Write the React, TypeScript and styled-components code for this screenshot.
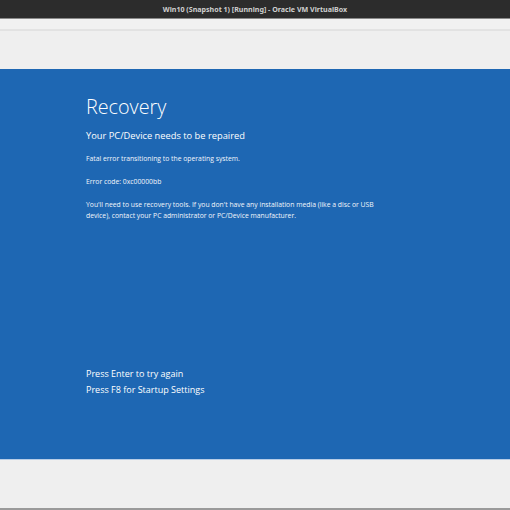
import styled, { createGlobalStyle } from "styled-components";

const Global = createGlobalStyle`
  html, body {
    margin: 0;
    padding: 0;
    background: #efefef;
  }
  #root {
    width: 510px;
    height: 510px;
    overflow: hidden;
  }
`;

export default function App() {
  return (
    <>
      <Global />
      <Window>
        <TitleBar>Win10 (Snapshot 1) [Running] - Oracle VM VirtualBox</TitleBar>
        <Toolbar />
        <Screen>
          <Top>
            <Heading>Recovery</Heading>
            <Subheading>Your PC/Device needs to be repaired</Subheading>
            <Message>Fatal error transitioning to the operating system.</Message>
            <Message>Error code: 0xc00000bb</Message>
            <Message>
              You'll need to use recovery tools. If you don't have any installation media (like a disc or USB
              device), contact your PC administrator or PC/Device manufacturer.
            </Message>
          </Top>
          <Options>
            <Option>Press Enter to try again</Option>
            <Option>Press F8 for Startup Settings</Option>
          </Options>
        </Screen>
        <StatusBar />
      </Window>
    </>
  );
}

const Window = styled.div`
  width: 510px;
  height: 510px;
  display: flex;
  flex-direction: column;
  background: #efefef;
`;

const TitleBar = styled.div`
  height: 18px;
  flex: none;
  background: #2c2c2c;
  border-bottom: 1px solid #8a8a8a;
  color: #d0d0d0;
  font-family: "Noto Sans", sans-serif;
  font-weight: bold;
  font-size: 7.1px;
  display: flex;
  align-items: center;
  justify-content: center;
`;

const Toolbar = styled.div`
  height: 50px;
  flex: none;
  background: #efefef;
  box-sizing: border-box;
  border-top: 11px solid #f1f1f1;
  box-shadow: inset 0 1px 0 #e2e2e2;
  position: relative;
  &::before {
    content: "";
    position: absolute;
    left: 0;
    right: 0;
    top: -1px;
    height: 1px;
    background: #e3e3e3;
  }
`;

const Screen = styled.div`
  height: 390px;
  flex: none;
  background: #1e67b3;
  color: #ffffff;
  font-family: "Open Sans", "Noto Sans", sans-serif;
  box-sizing: border-box;
  padding: 24px 0 0 86px;
  display: flex;
  flex-direction: column;
`;

const Top = styled.div`
  display: flex;
  flex-direction: column;
`;

const Heading = styled.div`
  font-size: 19.8px;
  font-weight: 300;
  line-height: 28px;
`;

const Subheading = styled.div`
  font-size: 9.3px;
  line-height: 14px;
  margin-top: 8px;
  margin-bottom: 10px;
`;

const Message = styled.p`
  font-size: 6.8px;
  line-height: 11px;
  margin: 0 0 12px;
  max-width: 300px;
  color: #f2f6fb;
`;

const Options = styled.div`
  margin-top: 133px;
  display: flex;
  flex-direction: column;
`;

const Option = styled.div`
  font-size: 9px;
  line-height: 16px;
`;

const StatusBar = styled.div`
  flex: 1;
  background: #efefef;
  border-top: 1px solid #b8cde6;
  border-bottom: 2px solid #9a9a9a;
`;
